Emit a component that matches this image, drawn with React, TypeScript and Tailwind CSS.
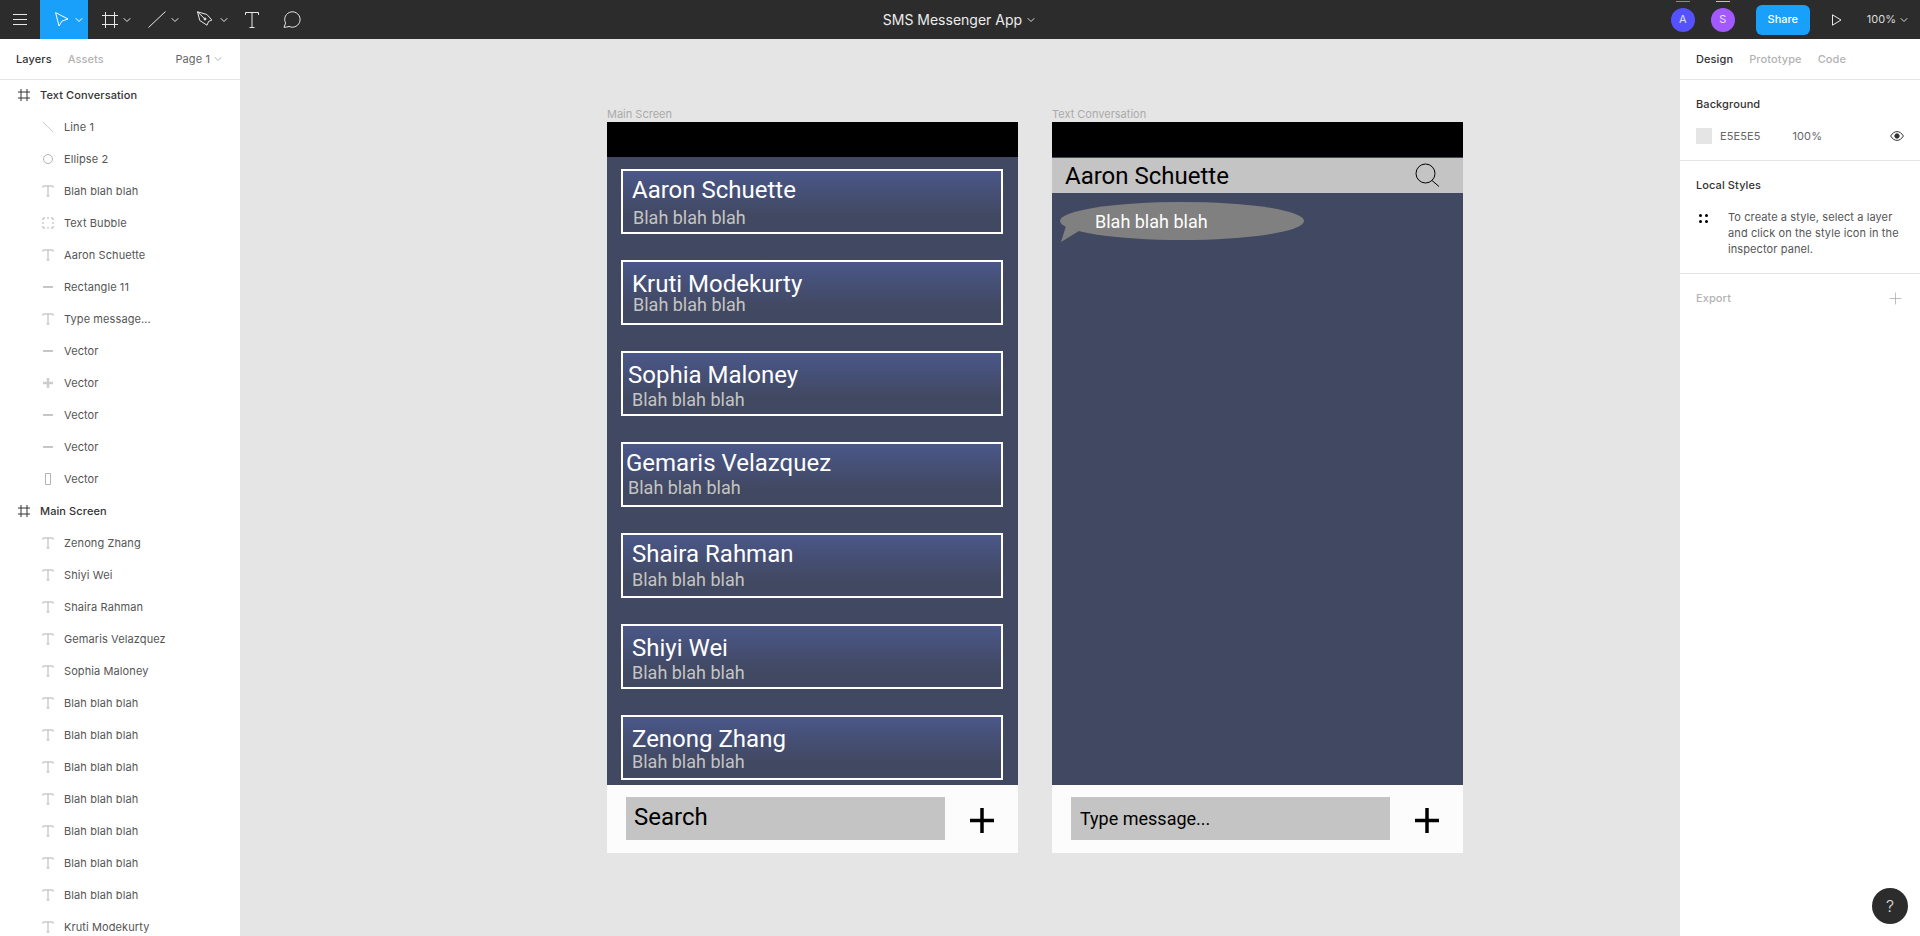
import { ChevronDown, Plus } from "lucide-react";

const layers = [
  { name: "Line 1", icon: "line" },
  { name: "Ellipse 2", icon: "ellipse" },
  { name: "Blah blah blah", icon: "text" },
  { name: "Text Bubble", icon: "group" },
  { name: "Aaron Schuette", icon: "text" },
  { name: "Rectangle 11", icon: "dash" },
  { name: "Type message...", icon: "text" },
  { name: "Vector", icon: "dash" },
  { name: "Vector", icon: "plus" },
  { name: "Vector", icon: "dash" },
  { name: "Vector", icon: "dash" },
  { name: "Vector", icon: "rect" },
];

const mainLayers = [
  "Zenong Zhang",
  "Shiyi Wei",
  "Shaira Rahman",
  "Gemaris Velazquez",
  "Sophia Maloney",
  "Blah blah blah",
  "Blah blah blah",
  "Blah blah blah",
  "Blah blah blah",
  "Blah blah blah",
  "Blah blah blah",
  "Blah blah blah",
  "Kruti Modekurty",
];

// text offsets differ per card in the design file, they were placed by hand
const contacts = [
  { name: "Aaron Schuette", nameClass: "ml-[9px] mt-[7px]", subClass: "ml-[10px] mt-[7px]" },
  { name: "Kruti Modekurty", nameClass: "ml-[9px] mt-[10px]", subClass: "ml-[10px] mt-0" },
  { name: "Sophia Maloney", nameClass: "ml-[5px] mt-[10px]", subClass: "ml-[9px] mt-[4px]" },
  { name: "Gemaris Velazquez", nameClass: "ml-[3px] mt-[7px]", subClass: "ml-[5px] mt-[4px]" },
  { name: "Shaira Rahman", nameClass: "ml-[9px] mt-[7px]", subClass: "ml-[9px] mt-[5px]" },
  { name: "Shiyi Wei", nameClass: "ml-[9px] mt-[10px]", subClass: "ml-[9px] mt-[4px]" },
  { name: "Zenong Zhang", nameClass: "ml-[9px] mt-[10px]", subClass: "ml-[9px] mt-[2px]" },
];

const LayerIcon = ({ type }: { type: string }) => {
  return (
    <svg width="12" height="12" viewBox="0 0 12 12" fill="none" stroke="#b3b3b3" strokeWidth="1">
      {type === "line" && <path d="M1 1l10 10" stroke="#cccccc" />}
      {type === "ellipse" && <circle cx="6" cy="6" r="4.5" />}
      {type === "text" && <path d="M1 2.5V1h10v1.5M6 1v10M4.5 11h3" />}
      {type === "group" && <path d="M1 3V1h2M5 1h2M9 1h2v2M11 5v2M11 9v2H9M7 11H5M3 11H1V9M1 7V5" />}
      {type === "dash" && <path d="M1 6h10" strokeWidth="1.500" />}
      {type === "plus" && <path d="M1 6h10M6 1v10" strokeWidth="2.500" stroke="#cccccc" />}
      {type === "rect" && <path d="M3.500.5h5v11h-5z" />}
    </svg>
  );
};

const FrameIcon = () => (
  <svg width="12" height="12" viewBox="0 0 12 12" fill="none" stroke="#333" strokeWidth="1">
    <path d="M3 0v12M9 0v12M0 3h12M0 9h12" />
  </svg>
);

const Toolbar = () => (
  <header className="flex h-[39px] shrink-0 items-center bg-[#2c2c2c] pr-[10px] text-white">
    <div className="flex w-[40px] justify-center">
      <svg width="14" height="11" viewBox="0 0 14 11" stroke="#e8e8e8" strokeWidth="1">
        <path d="M0 .5h14M0 5.500h14M0 10.500h14" />
      </svg>
    </div>
    <div className="flex h-full w-[48px] items-center bg-[#18a0fb] pl-[15px]">
      <svg width="14" height="15" viewBox="0 0 14 15" fill="none" stroke="#fff" strokeWidth="1">
        <path d="M.6.6l12.400 6.400-6 2-3 5z" />
      </svg>
      <ChevronDown size={12} strokeWidth={2} color="#fff" className="ml-[4px]" />
    </div>
    <svg className="ml-[14px]" width="16" height="16" viewBox="0 0 16 16" fill="none" stroke="#e8e8e8" strokeWidth="1">
      <path d="M3.500 0v16M12.500 0v16M0 3.500h16M0 12.500h16" />
    </svg>
    <ChevronDown size={12} strokeWidth={2} color="#e8e8e8" className="ml-[3px]" />
    <svg className="ml-[15px]" width="18" height="17" viewBox="0 0 18 17" fill="none" stroke="#e8e8e8" strokeWidth="1">
      <path d="M.5 16.500l17-16" />
    </svg>
    <ChevronDown size={12} strokeWidth={2} color="#e8e8e8" className="ml-[3px]" />
    <svg className="ml-[16px]" width="16" height="17" viewBox="0 0 16 17" fill="none" stroke="#e8e8e8" strokeWidth="1">
      <path d="M.5.8l9.400 2.700 5 5.500-3.300 1.400-1.600 3.800L6 11.600 2.800 9.500zM.5.8l6.600 6.400" />
      <circle cx="8" cy="8" r="1" fill="#e8e8e8" />
    </svg>
    <ChevronDown size={12} strokeWidth={2} color="#e8e8e8" className="ml-[5px]" />
    <svg className="ml-[15px]" width="14" height="16" viewBox="0 0 14 16" fill="none" stroke="#e8e8e8" strokeWidth="1">
      <path d="M.5 3V.5h13V3M7 .5v15M4.500 15.500h5" />
    </svg>
    <svg className="ml-[24px]" width="18" height="17" viewBox="0 0 18 17" fill="none" stroke="#e8e8e8" strokeWidth="1">
      <path d="M1 16.300l1.600-4.200A7.700 7.700 0 1 1 6 15.400c-1.500.6-3.200.9-5 .9z" />
    </svg>
    <div className="flex flex-1 items-center justify-center gap-[3px] pr-[52px] text-[14px] text-[#ececec]">
      <span>SMS Messenger App</span>
      <ChevronDown size={12} strokeWidth={2} color="#d8d8d8" />
    </div>
    <div className="relative flex h-[24px] w-[24px] items-center justify-center rounded-full bg-[#5551ff] text-[11px] text-white/80">
      A
      <div className="absolute -top-[7px] left-[5px] h-[1px] w-[14px] bg-[#1bc47d]" />
    </div>
    <div className="relative ml-[16px] flex h-[24px] w-[24px] items-center justify-center rounded-full bg-[#a259ff] text-[11px] text-white/80">
      S
      <div className="absolute -top-[7px] left-[5px] h-[1px] w-[14px] bg-[#ffc700]" />
    </div>
    <div className="ml-[21px] flex h-[30px] w-[54px] items-center justify-center rounded-[6px] bg-[#18a0fb] text-[11px] font-medium text-white">
      Share
    </div>
    <svg className="ml-[22px]" width="10" height="12" viewBox="0 0 10 12" fill="none" stroke="#e8e8e8" strokeWidth="1">
      <path d="M.5.8v10.400L9 6z" />
    </svg>
    <div className="ml-[25px] flex items-center gap-[2px] text-[11px] text-[#dcdcdc]">
      <span>100%</span>
      <ChevronDown size={12} strokeWidth={2} color="#d8d8d8" />
    </div>
  </header>
);

const LayerHeader = ({ name }: { name: string }) => (
  <div className="flex h-[32px] shrink-0 items-center pl-[18px] text-[11px] font-medium text-[#333]">
    <FrameIcon />
    <span className="ml-[10px]">{name}</span>
  </div>
);

const LeftPanel = () => (
  <aside className="flex w-[240px] shrink-0 flex-col overflow-hidden bg-white tracking-[0.1px]">
    <div className="flex h-[41px] shrink-0 items-center border-b border-[#e5e5e5] px-[16px] text-[11px] font-medium">
      <span className="text-[#333]">Layers</span>
      <span className="ml-[16px] text-[#b3b3b3]">Assets</span>
      <span className="ml-auto flex items-center gap-[2px] font-normal text-[#666]">
        Page 1
        <ChevronDown size={12} strokeWidth={1.500} color="#999" />
      </span>
    </div>
    <div className="-mt-[1px] flex flex-col">
      <LayerHeader name="Text Conversation" />
      {layers.map((layer, i) => (
        <div key={i} className="flex h-[32px] shrink-0 items-center pl-[42px] text-[11px] text-[#555]">
          <LayerIcon type={layer.icon} />
          <span className="ml-[10px]">{layer.name}</span>
        </div>
      ))}
      <LayerHeader name="Main Screen" />
      {mainLayers.map((name, i) => (
        <div key={i} className="flex h-[32px] shrink-0 items-center pl-[42px] text-[11px] text-[#555]">
          <LayerIcon type="text" />
          <span className="ml-[10px]">{name}</span>
        </div>
      ))}
    </div>
  </aside>
);

const AddIcon = () => (
  <svg width="24" height="25" viewBox="0 0 24 25" fill="none" stroke="#000" strokeWidth="3.500">
    <path d="M0 12.500h24M12 0v25" />
  </svg>
);

const BottomBar = ({ children }: { children: React.ReactNode }) => (
  <div className="flex h-[68px] shrink-0 items-start bg-[#fcfcfc] pl-[19px] pt-[12px]">
    <div className="h-[43px] w-[319px] bg-[#c4c4c4]">{children}</div>
    <div className="ml-[25px] mt-[11px]">
      <AddIcon />
    </div>
  </div>
);

const FrameLabel = ({ text }: { text: string }) => (
  <div className="mb-[2px] h-[12px] pt-[1px] text-[11px] leading-[11px] text-[#aaa]">{text}</div>
);

const MainScreen = () => (
  <div className="w-[411px]">
    <FrameLabel text="Main Screen" />
    <div className="flex h-[731px] flex-col bg-[#414861]" style={{ fontFamily: "Roboto, sans-serif" }}>
      <div className="h-[35px] shrink-0 bg-black" />
      <div className="flex flex-1 flex-col gap-[26px] overflow-hidden pl-[14px] pr-[15px] pt-[12px]">
        {contacts.map((c) => (
          <div
            key={c.name}
            className="h-[65px] shrink-0 border-2 border-white bg-gradient-to-b from-[#4a5789] to-[#414861] to-75%"
          >
            <div className={`text-[24px] leading-[24px] text-white ${c.nameClass}`}>{c.name}</div>
            <div className={`text-[18px] leading-[18px] text-[#c4c4c4] ${c.subClass}`}>Blah blah blah</div>
          </div>
        ))}
      </div>
      <BottomBar>
        <div className="pl-[8px] pt-[6px] text-[24px] leading-[28px] text-black">Search</div>
      </BottomBar>
    </div>
  </div>
);

const ConversationScreen = () => (
  <div className="w-[411px]">
    <FrameLabel text="Text Conversation" />
    <div className="flex h-[731px] flex-col bg-[#414861]" style={{ fontFamily: "Roboto, sans-serif" }}>
      <div className="h-[35px] shrink-0 bg-black" />
      <div className="mt-[1px] flex h-[35px] shrink-0 items-center justify-between bg-[#c4c4c4] pl-[13px] pr-[23px]">
        <span className="text-[24px] leading-[28px] text-black">Aaron Schuette</span>
        <svg width="25" height="25" viewBox="0 0 25 25" fill="none" stroke="#000" strokeWidth="1">
          <circle cx="10.500" cy="10.500" r="9.500" />
          <path d="M17 17.500l7 6" />
        </svg>
      </div>
      <div className="flex flex-1 items-start pl-[8px] pt-[9px]">
        <div className="relative flex h-[38px] w-[244px] items-center rounded-[50%] bg-[#808080] pl-[35px] text-[18px] text-white">
          Blah blah blah
          <svg className="absolute left-[1px] top-[24px]" width="20" height="18" viewBox="0 0 20 18">
            <path d="M5 0L0 16 18 5z" fill="#808080" />
          </svg>
        </div>
      </div>
      <BottomBar>
        <div className="pl-[9px] pt-[10px] text-[18px] leading-[24px] text-black">Type message...</div>
      </BottomBar>
    </div>
  </div>
);

const RightPanel = () => (
  <aside className="flex w-[240px] shrink-0 flex-col bg-white text-[11px] tracking-[0.1px]">
    <div className="flex h-[41px] items-center gap-[16px] border-b border-[#e5e5e5] pl-[16px] font-medium text-[#b3b3b3]">
      <span className="text-[#333]">Design</span>
      <span>Prototype</span>
      <span>Code</span>
    </div>
    <div className="h-[81px] border-b border-[#e5e5e5] px-[16px]">
      <div className="pt-[16px] font-medium leading-[16px] text-[#333]">Background</div>
      <div className="mt-[16px] flex items-center text-[#666]">
        <div className="h-[16px] w-[16px] bg-[#e5e5e5]" />
        <span className="ml-[8px]">E5E5E5</span>
        <span className="ml-[32px]">100%</span>
        <svg className="ml-auto" width="14" height="10" viewBox="0 0 14 10" fill="none" stroke="#333" strokeWidth="1">
          <path d="M.6 5C2.500 2 4.600.6 7 .6S11.500 2 13.400 5C11.500 8 9.400 9.400 7 9.400S2.500 8 .6 5z" />
          <circle cx="7" cy="5" r="2.200" fill="#333" />
        </svg>
      </div>
    </div>
    <div className="h-[113px] border-b border-[#e5e5e5] px-[16px]">
      <div className="pt-[16px] font-medium leading-[16px] text-[#333]">Local Styles</div>
      <div className="mt-[16px] flex">
        <div className="ml-[3px] mt-[5px] grid h-[8px] w-[8px] shrink-0 grid-cols-2 gap-[3px]">
          <div className="h-[3px] w-[3px] rounded-full bg-black" />
          <div className="h-[3px] w-[3px] rounded-full bg-black" />
          <div className="h-[3px] w-[3px] rounded-full bg-black" />
          <div className="h-[3px] w-[3px] rounded-full bg-black" />
        </div>
        <p className="ml-[21px] leading-[16px] text-[#555]">
          To create a style, select a layer and click on the style icon in the inspector panel.
        </p>
      </div>
    </div>
    <div className="flex h-[48px] items-center justify-between pl-[16px] pr-[15px] font-medium text-[#b3b3b3]">
      <span>Export</span>
      <Plus size={19} strokeWidth={0.800} color="#999" />
    </div>
  </aside>
);

export default function App() {
  return (
    <div className="relative flex h-[936px] w-[1920px] flex-col overflow-hidden" style={{ fontFamily: "Inter, sans-serif" }}>
      <Toolbar />
      <div className="flex min-h-0 flex-1">
        <LeftPanel />
        <main className="flex flex-1 items-start gap-[34px] bg-[#e5e5e5] pl-[367px] pt-[69px]">
          <MainScreen />
          <ConversationScreen />
        </main>
        <RightPanel />
      </div>
      <div className="absolute bottom-[12px] right-[12px] flex h-[36px] w-[36px] items-center justify-center rounded-full bg-[#2c2c2c] text-[16px] font-light text-[#e0e0e0]">
        ?
      </div>
    </div>
  );
}
